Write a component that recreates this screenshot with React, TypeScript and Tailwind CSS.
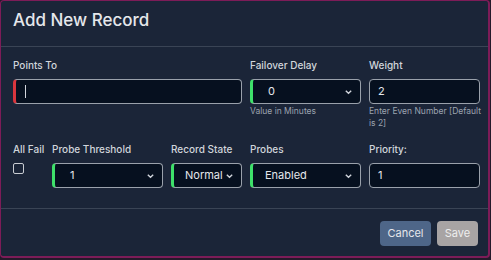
const Chevron = () => (
  <svg width="9" height="9" viewBox="0 0 10 10" className="absolute right-[7px] top-1/2 -translate-y-1/2 text-gray-300">
    <path d="M2 3.5 L5 6.5 L8 3.5" fill="none" stroke="currentColor" strokeWidth="1.5" />
  </svg>
);

const SelectBox = ({ value, width, pad = 'pl-[15px]' }: { value: string; width: string; pad?: string }) => (
  <div className={`relative ${width} h-[25px] rounded-[4px] border border-[#9aa1ab] border-l-[3px] border-l-[#3ee06a] bg-[#06101f] flex items-center ${pad} text-[11px] text-gray-200`}>
    {value}
    <Chevron />
  </div>
);

const TextBox = ({ value, width }: { value: string; width: string }) => (
  <div className={`${width} h-[25px] rounded-[4px] border border-[#9aa1ab] bg-[#06101f] flex items-center pl-[8px] text-[11px] text-gray-200`}>
    {value}
  </div>
);

const Label = ({ children }: { children: React.ReactNode }) => (
  <div className="text-[10px] font-medium text-[#d1d5db] mb-[7px] leading-[14px] whitespace-nowrap">{children}</div>
);

const App = () => {
  return (
    <div className="w-[491px] h-[260px] bg-[#241a2a] overflow-hidden" style={{ fontFamily: 'Inter, "Liberation Sans", sans-serif' }}>
      <div className="w-[490px] h-[258px] bg-[#1b2538] border border-[#7d1c58] border-r-2 border-b-2 rounded-[4px] flex flex-col">
        <div className="h-[46px] border-b border-[#3a4455] flex items-start pt-[7px] pl-[12px]">
          <h1 className="text-[17px] font-medium text-[#e5e7eb] leading-[24px]">Add New Record</h1>
        </div>
        <div className="pt-[11px] px-[12px] h-[162px] border-b border-[#3a4455]">
          <div className="flex gap-[8px]">
            <div>
              <Label>Points To</Label>
              <div className="w-[229px] h-[25px] rounded-[4px] border border-[#9aa1ab] border-l-[3px] border-l-[#d9363e] bg-[#06101f] flex items-center pl-[9px]">
                <div className="w-px h-[13px] bg-gray-300" />
              </div>
            </div>
            <div>
              <Label>Failover Delay</Label>
              <SelectBox value="0" width="w-[111px]" />
              <div className="text-[8.5px] text-[#9ca3af] mt-[1px] leading-[12px]">Value in Minutes</div>
            </div>
            <div>
              <Label>Weight</Label>
              <TextBox value="2" width="w-[111px]" />
              <div className="text-[8.5px] text-[#9ca3af] mt-[1px] leading-[12px] w-[111px]">
                <div className="whitespace-nowrap">Enter Even Number [Default</div>
                <div>is 2]</div>
              </div>
            </div>
          </div>
          <div className="flex gap-[8px] mt-[13px]">
            <div className="w-[31px]">
              <Label>All Fail</Label>
              <div className="w-[11px] h-[11px] border border-[#c8ccd2] rounded-[2px] mt-[4px]" />
            </div>
            <div>
              <Label>Probe Threshold</Label>
              <SelectBox value="1" width="w-[111px]" />
            </div>
            <div>
              <Label>Record State</Label>
              <SelectBox value="Normal" width="w-[71px]" pad="pl-[11px]" />
            </div>
            <div>
              <Label>Probes</Label>
              <SelectBox value="Enabled" width="w-[111px]" pad="pl-[12px]" />
            </div>
            <div>
              <Label>Priority:</Label>
              <TextBox value="1" width="w-[111px]" />
            </div>
          </div>
        </div>
        <div className="flex justify-end gap-[6px] pr-[10px] pt-[12px]">
          <button className="w-[51px] h-[25px] rounded-[4px] bg-[#4e6688] text-[11px] text-[#e5e7eb]">Cancel</button>
          <button className="w-[41px] h-[25px] rounded-[4px] bg-[#a8a4a4] text-[11px] text-[#eeeeee]">Save</button>
        </div>
      </div>
    </div>
  );
};

export default App;
